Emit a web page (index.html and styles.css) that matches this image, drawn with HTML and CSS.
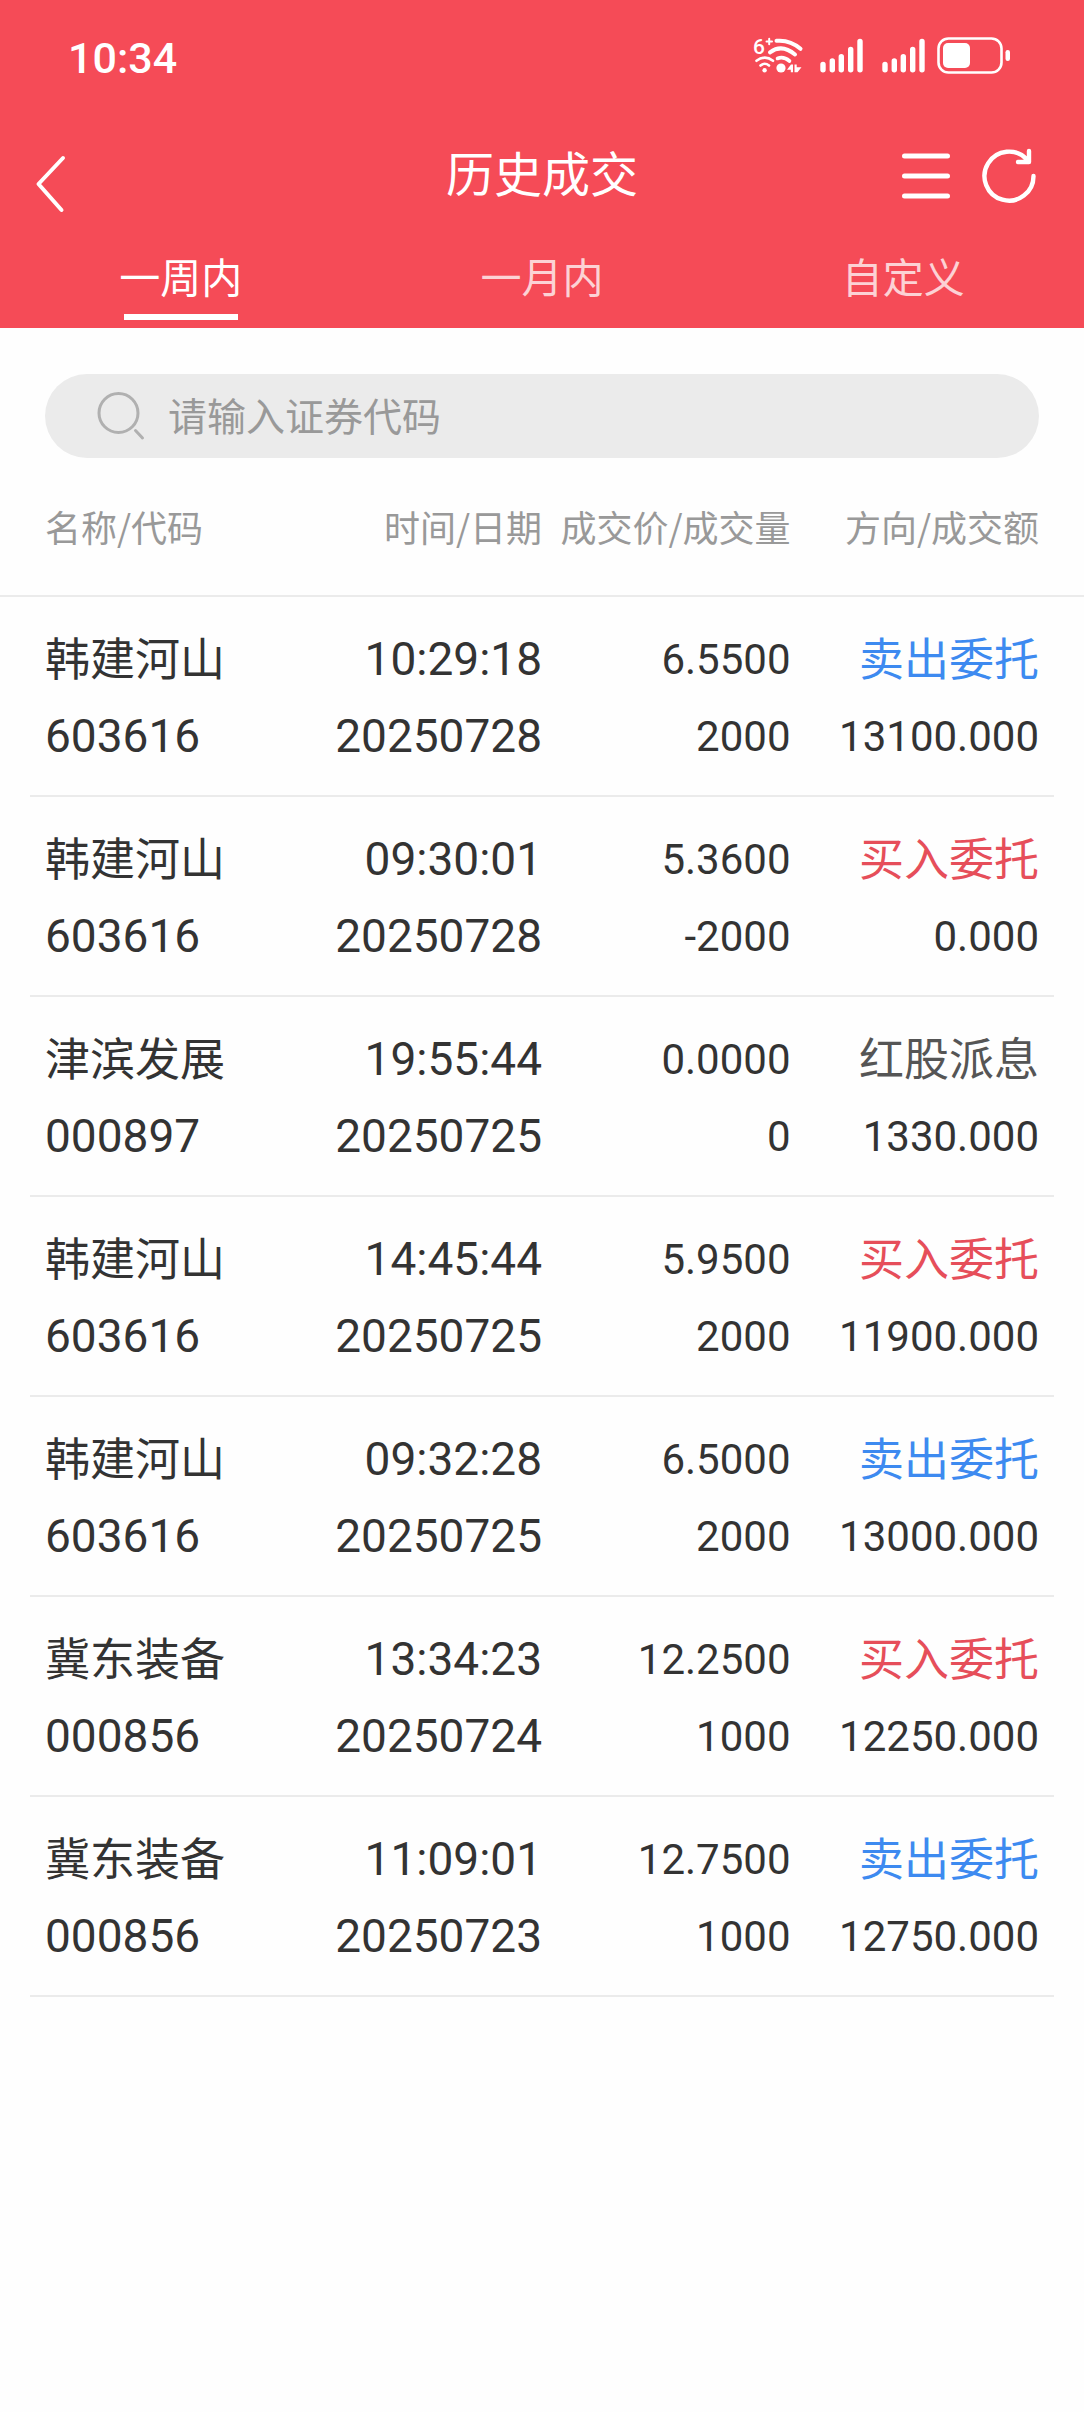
FILE: index.html
```html
<!DOCTYPE html>
<html lang="zh-CN">
<head>
<meta charset="utf-8">
<meta name="viewport" content="width=device-width, initial-scale=1">
<title>历史成交</title>
<link rel="stylesheet" href="styles.css">
</head>
<body>
<header class="top">
  <div class="status">
    <time class="clock">10:34</time>
    <div class="indicators">
      <svg class="wifi" viewBox="752 26 57 60" aria-hidden="true">
        <text class="wifi-gen" x="753" y="54">6</text>
        <g class="stroke">
          <path d="M766.500 41.500h5.500M769.200 38.700v5.500" stroke-width="2"/>
          <path d="M776.500 40.800Q790 39.500 800.500 48.800" stroke-width="4" />
          <path d="M770 52.300Q782 43.500 795 54.500" stroke-width="4"/>
          <path d="M777.500 58.500Q783.500 56 789.500 61" stroke-width="3.600"/>
          <path d="M756.500 60.800Q764.800 54.500 773 60.800M760.500 65.500Q764.700 62 769 65.500" stroke-width="2.600"/>
        </g>
        <circle cx="781" cy="68" r="4.600"/>
        <circle cx="764.600" cy="70.300" r="2.200"/>
        <path d="M787 69.800L791 64.500h2v7.700h-2.200v-2.400zM794.500 64.500h2.200v2.700h4.800l-4 5h-3z"/>
      </svg>
      <svg class="signal" viewBox="820 34 51 44" aria-hidden="true">
        <path class="stroke" stroke-width="5.400" d="M823 64.500V69.700M832.300 61V69.700M841.300 56.700V69.700M850.700 49.500V69.700M860 41.500V69.700"/>
      </svg>
      <svg class="signal-end" viewBox="820 34 44 44" aria-hidden="true">
        <path class="stroke" stroke-width="5.400" d="M823 64.500V69.700M832.300 61V69.700M841.300 56.700V69.700M850.700 49.500V69.700M860 41.500V69.700"/>
      </svg>
      <svg class="battery" viewBox="937 34 74 44" aria-hidden="true">
        <rect class="stroke" x="938.500" y="38.500" width="63" height="34" rx="10" stroke-width="2.600"/>
        <rect x="943" y="43" width="27" height="25" rx="5"/>
        <rect x="1005.500" y="50" width="4.500" height="11" rx="2.200"/>
      </svg>
    </div>
  </div>
  <div class="bar">
    <button class="icon-btn back" type="button" aria-label="返回">
      <svg class="back-icon" viewBox="30 129 44 84" aria-hidden="true"><path class="stroke" stroke-width="4" d="M63 158L38.500 184L61.500 210"/></svg>
    </button>
    <h1 class="title">历史成交</h1>
    <div class="actions">
      <button class="icon-btn" type="button" aria-label="菜单">
        <svg class="action-icon" viewBox="894 135 64 72" aria-hidden="true"><path class="stroke" stroke-width="5" d="M904.500 156H947.500M904.500 176H947.500M904.500 196H947.500"/></svg>
      </button>
      <button class="icon-btn" type="button" aria-label="刷新">
        <svg class="action-icon" viewBox="978 135 64 72" aria-hidden="true"><path class="stroke" stroke-width="4.400" d="M1033.500 176A24.500 24.500 0 1 1 1027 159.500M1029 151V162H1018"/></svg>
      </button>
    </div>
  </div>
  <nav class="tabs">
    <a class="tab active" href="#week" aria-current="page">一周内</a>
    <a class="tab" href="#month">一月内</a>
    <a class="tab" href="#custom">自定义</a>
  </nav>
</header>
<main>
  <form class="search" role="search">
    <label class="search-label" for="code" aria-label="证券代码">
      <svg class="search-icon" viewBox="96 388 50 54" aria-hidden="true"><circle cx="118.500" cy="412" r="19.500"/><path d="M135.500 429.500l7 7.500"/></svg>
    </label>
    <input class="search-input" id="code" type="text" placeholder="请输入证券代码">
  </form>
  <table class="trades">
    <thead>
      <tr class="head"><th>名称/代码</th><th>时间/日期</th><th>成交价/成交量</th><th>方向/成交额</th></tr>
    </thead>
    <tbody>
      <tr class="row"><td>韩建河山<span class="num">603616</span></td><td class="num">10:29:18<span class="num">20250728</span></td><td class="amt">6.5500<span class="amt">2000</span></td><td class="sell">卖出委托<span class="amt">13100.000</span></td></tr>
      <tr class="row"><td>韩建河山<span class="num">603616</span></td><td class="num">09:30:01<span class="num">20250728</span></td><td class="amt">5.3600<span class="amt">-2000</span></td><td class="buy">买入委托<span class="amt">0.000</span></td></tr>
      <tr class="row"><td>津滨发展<span class="num">000897</span></td><td class="num">19:55:44<span class="num">20250725</span></td><td class="amt">0.0000<span class="amt">0</span></td><td class="other">红股派息<span class="amt">1330.000</span></td></tr>
      <tr class="row"><td>韩建河山<span class="num">603616</span></td><td class="num">14:45:44<span class="num">20250725</span></td><td class="amt">5.9500<span class="amt">2000</span></td><td class="buy">买入委托<span class="amt">11900.000</span></td></tr>
      <tr class="row"><td>韩建河山<span class="num">603616</span></td><td class="num">09:32:28<span class="num">20250725</span></td><td class="amt">6.5000<span class="amt">2000</span></td><td class="sell">卖出委托<span class="amt">13000.000</span></td></tr>
      <tr class="row"><td>冀东装备<span class="num">000856</span></td><td class="num">13:34:23<span class="num">20250724</span></td><td class="amt">12.2500<span class="amt">1000</span></td><td class="buy">买入委托<span class="amt">12250.000</span></td></tr>
      <tr class="row"><td>冀东装备<span class="num">000856</span></td><td class="num">11:09:01<span class="num">20250723</span></td><td class="amt">12.7500<span class="amt">1000</span></td><td class="sell">卖出委托<span class="amt">12750.000</span></td></tr>
    </tbody>
  </table>
</main>
</body>
</html>
```
FILE: styles.css
```css
* { box-sizing: border-box; }
body {
  margin: 0;
  background: #fefefe;
  color: #333;
  font-family: "Noto Sans CJK SC", sans-serif;
}
svg { display: block; }

.top { background: #f54b57; color: #fff; }
.top svg { fill: #fff; }
.top .stroke {
  fill: none;
  stroke: #fff;
  stroke-linecap: round;
  stroke-linejoin: round;
}

.status {
  display: flex;
  align-items: center;
  justify-content: space-between;
  height: 112px;
  padding: 0 73px 0 68px;
}
.clock { padding-top: 4px; font: 500 43px/64px Roboto, "Noto Sans CJK SC", sans-serif; }
.indicators { display: flex; align-items: center; gap: 11px; }
.indicators svg { height: 44px; }
.indicators .wifi { width: 57px; height: 60px; }
.wifi-gen { font: 500 21px Roboto, sans-serif; }
.signal { width: 51px; }
.signal-end { width: 44px; }
.battery { width: 74px; }

.bar {
  display: grid;
  grid-template-columns: 1fr auto 1fr;
  align-items: center;
  height: 118px;
  padding: 0 42px;
}
.icon-btn { padding: 0; border: 0; background: none; }
.back { justify-self: start; margin-left: -12px; }
.back-icon { width: 44px; height: 84px; }
.title { margin: 0; font-size: 48px; font-weight: 400; line-height: 64px; }
.actions { display: flex; gap: 20px; justify-self: end; }
.action-icon { width: 64px; height: 72px; }

.tabs { display: grid; grid-template-columns: repeat(3, 1fr); }
.tab {
  display: flex;
  flex-direction: column;
  align-items: center;
  gap: 8px;
  padding: 14px 0 8px;
  color: rgba(255, 255, 255, 0.75);
  font-size: 41px;
  line-height: 62px;
  text-decoration: none;
}
.tab::after { content: ""; width: 114px; height: 6px; }
.tab.active { color: #fff; }
.tab.active::after { background: #fff; }

.search {
  display: flex;
  align-items: center;
  gap: 22px;
  height: 84px;
  margin: 46px 45px 0;
  padding: 0 51px;
  border-radius: 42px;
  background: #ebebeb;
}
.search-icon { width: 50px; height: 54px; fill: none; stroke: #b0b0b0; stroke-width: 3; stroke-linecap: round; }
.search-input {
  flex: 1;
  min-width: 0;
  padding: 0 0 4px;
  border: 0;
  outline: 0;
  background: none;
  color: #333;
  font: 39px/60px "Noto Sans CJK SC", sans-serif;
}
.search-input::placeholder { color: #999; opacity: 1; }

.trades, .trades thead, .trades tbody { display: block; }
.head, .row { display: grid; grid-template-columns: repeat(4, 1fr); }
.head {
  padding: 42px 45px 43px;
  border-bottom: 2px solid #ebebeb;
  color: #999;
  font-size: 36px;
  line-height: 52px;
}
.row {
  margin: 0 30px;
  padding: 21px 15px 20px;
  border-bottom: 2px solid #ebebeb;
  font-size: 45px;
  line-height: 77px;
}
.trades th, .trades td {
  padding: 0;
  font-weight: 400;
  text-align: right;
  white-space: nowrap;
}
.trades th:first-child, .trades td:first-child { text-align: left; }
.row span { display: block; margin-top: 3px; color: #333; }
.row .num, .row .amt { font-family: Roboto, "Noto Sans CJK SC", sans-serif; }
.row .num { font-size: 46px; }
.row .amt { font-size: 42px; }
/* Digits sit higher in the line than the Chinese names beside them. */
.row td.num, .row td.amt { padding-top: 3px; }
.row td.num span, .row td.amt span { margin-top: 0; }
.sell { color: #3d8af0; }
.buy { color: #e64e5a; }
.other { color: #555; }
```
